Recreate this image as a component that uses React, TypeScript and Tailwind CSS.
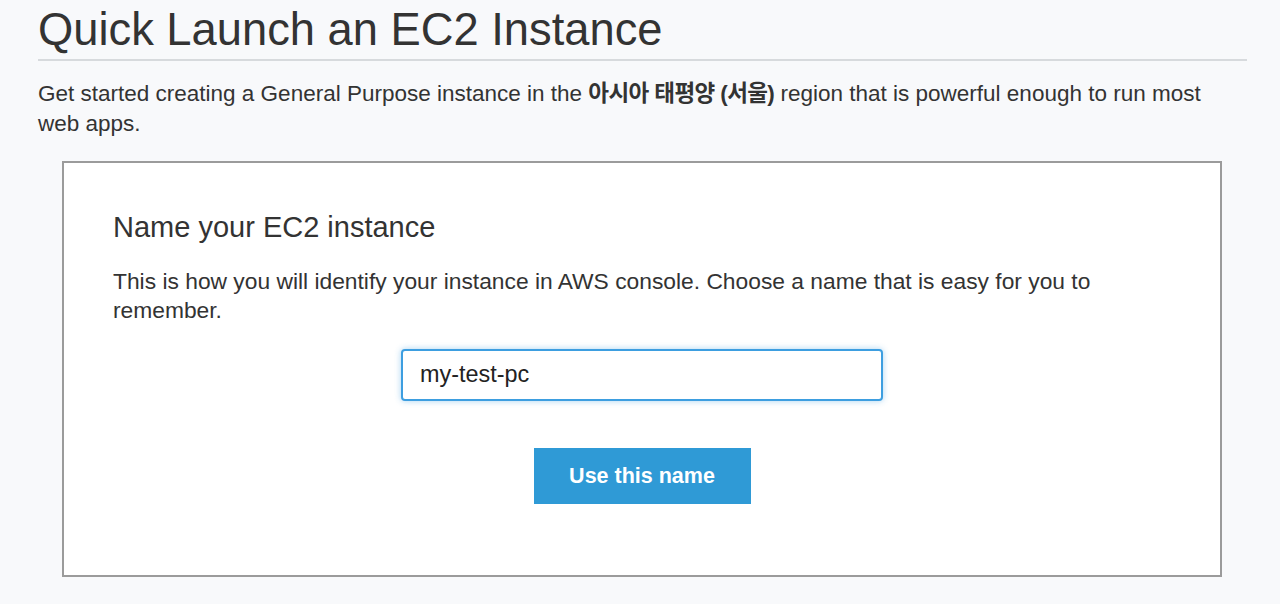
export default function App() {
  return (
    <div
      className="min-h-screen w-full bg-[#f8f9fb] text-[#333333] overflow-hidden"
      style={{ fontFamily: '"Liberation Sans", "Noto Sans CJK KR", Arial, sans-serif' }}
    >
      <div className="pl-[38px] pr-[33px]">
        {/* Title */}
        <h1 className="text-[45.3px] leading-[58px] pt-[1px] font-normal text-[#333333]">
          Quick Launch an EC2 Instance
        </h1>
        <div className="h-[2px] bg-[#d7dadd]" />

        <p className="mt-[18px] text-[22.5px] leading-[30px] pr-[35px]">
          Get started creating a General Purpose instance in the{' '}
          <span className="font-bold tracking-[-0.6px]">아시아 태평양 (서울)</span> region that is powerful enough
          to run most web apps.
        </p>
      </div>

      {/* Card */}
      <div className="ml-[62px] mt-[22px] w-[1160px] h-[416px] border-2 border-[#9b9b9b] bg-white pl-[49px] pr-[49px] pt-[46px]">
        <h2 className="text-[29px] leading-[36px] font-normal">Name your EC2 instance</h2>
        <p className="mt-[22px] text-[22.8px] leading-[29px] pr-[40px]">
          This is how you will identify your instance in AWS console. Choose a name that is easy for you to
          remember.
        </p>

        <div className="flex flex-col items-center mt-[24px]">
          <div className="w-[482px] h-[52px] rounded-[4px] border-2 border-[#3d9ee0] bg-white shadow-[0_0_6px_rgba(61,158,224,0.45)] flex items-center pl-[17px]">
            <span className="text-[23.4px] text-[#222222]">my-test-pc</span>
          </div>
          <button className="mt-[47px] w-[217px] h-[56px] bg-[#2f9ad6] text-white text-[21.5px] font-bold flex items-center justify-center">
            Use this name
          </button>
        </div>
      </div>
    </div>
  );
}
